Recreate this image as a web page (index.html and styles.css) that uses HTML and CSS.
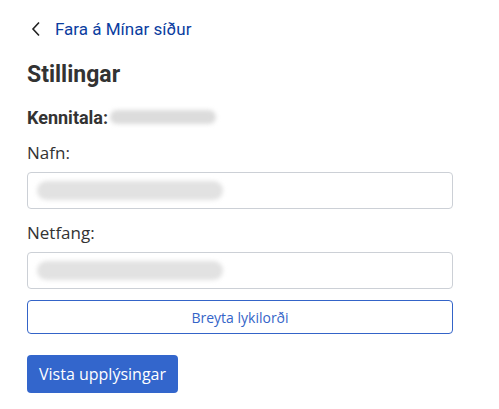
FILE: index.html
```html
<!DOCTYPE html>
<html lang="is">
<head>
<meta charset="utf-8">
<link rel="stylesheet" href="styles.css">
</head>
<body>
<main class="page">
  <a class="back" href="#">
    <svg class="chev" width="12" height="16" viewBox="0 0 12 16"><path d="M9 1.5 L3 8 L9 14.5" fill="none" stroke="#222" stroke-width="1.6"/></svg>
    <span>Fara á Mínar síður</span>
  </a>
  <h1 class="title">Stillingar</h1>
  <div class="kt">
    <span class="kt-label">Kennitala:</span>
    <span class="blur blur-kt"></span>
  </div>
  <div class="field">
    <label class="label">Nafn:</label>
    <div class="input"><span class="blur blur-in"></span></div>
  </div>
  <div class="field">
    <label class="label">Netfang:</label>
    <div class="input"><span class="blur blur-in"></span></div>
  </div>
  <button class="btn-outline">Breyta lykilorði</button>
  <button class="btn-primary">Vista upplýsingar</button>
</main>
</body>
</html>
```
FILE: styles.css
```css
html, body {
  margin: 0;
  background: #fff;
}
.page {
  width: 426px;
  padding: 17px 0 0 27px;
  display: flex;
  flex-direction: column;
  align-items: flex-start;
  font-family: "Open Sans", sans-serif;
  color: #333;
}
.back {
  display: flex;
  align-items: center;
  gap: 13px;
  padding-left: 3px;
  font-family: Roboto, sans-serif;
  font-size: 17px;
  line-height: 24px;
  color: #0b3d9f;
  text-decoration: none;
}
.chev { display: block; }
.title {
  margin: 20px 0 0;
  font-family: Roboto, sans-serif;
  font-weight: 700;
  font-size: 23px;
  line-height: 28px;
  color: #333;
}
.kt {
  display: flex;
  align-items: center;
  margin-top: 16px;
  height: 24px;
}
.kt-label {
  font-family: Roboto, sans-serif;
  font-weight: 700;
  font-size: 18px;
  color: #333;
}
.blur {
  display: block;
  background: #dcdcdc;
  border-radius: 8px;
  filter: blur(2px);
}
.blur-kt {
  width: 106px;
  height: 14px;
  margin-left: 2px;
}
.field {
  align-self: stretch;
  display: flex;
  flex-direction: column;
  margin-top: 12px;
}
.label {
  font-size: 17px;
  line-height: 24px;
  color: #333;
}
.input {
  margin-top: 7px;
  height: 35px;
  border: 1px solid #ccd0d6;
  border-radius: 4px;
  display: flex;
  align-items: center;
  padding-left: 9px;
}
.blur-in {
  width: 186px;
  height: 19px;
  background: #e2e2e2;
  border-radius: 10px;
}
.btn-outline {
  align-self: stretch;
  margin-top: 11px;
  height: 34px;
  border: 1px solid #3464c8;
  border-radius: 4px;
  background: #fff;
  color: #3464c8;
  font-family: "Open Sans", sans-serif;
  font-size: 14px;
  padding: 0;
}
.btn-primary {
  margin-top: 21px;
  height: 38px;
  padding: 0 12px;
  border: none;
  border-radius: 4px;
  background: #3366cc;
  color: #fff;
  font-family: "Open Sans", sans-serif;
  font-size: 16px;
}
```
